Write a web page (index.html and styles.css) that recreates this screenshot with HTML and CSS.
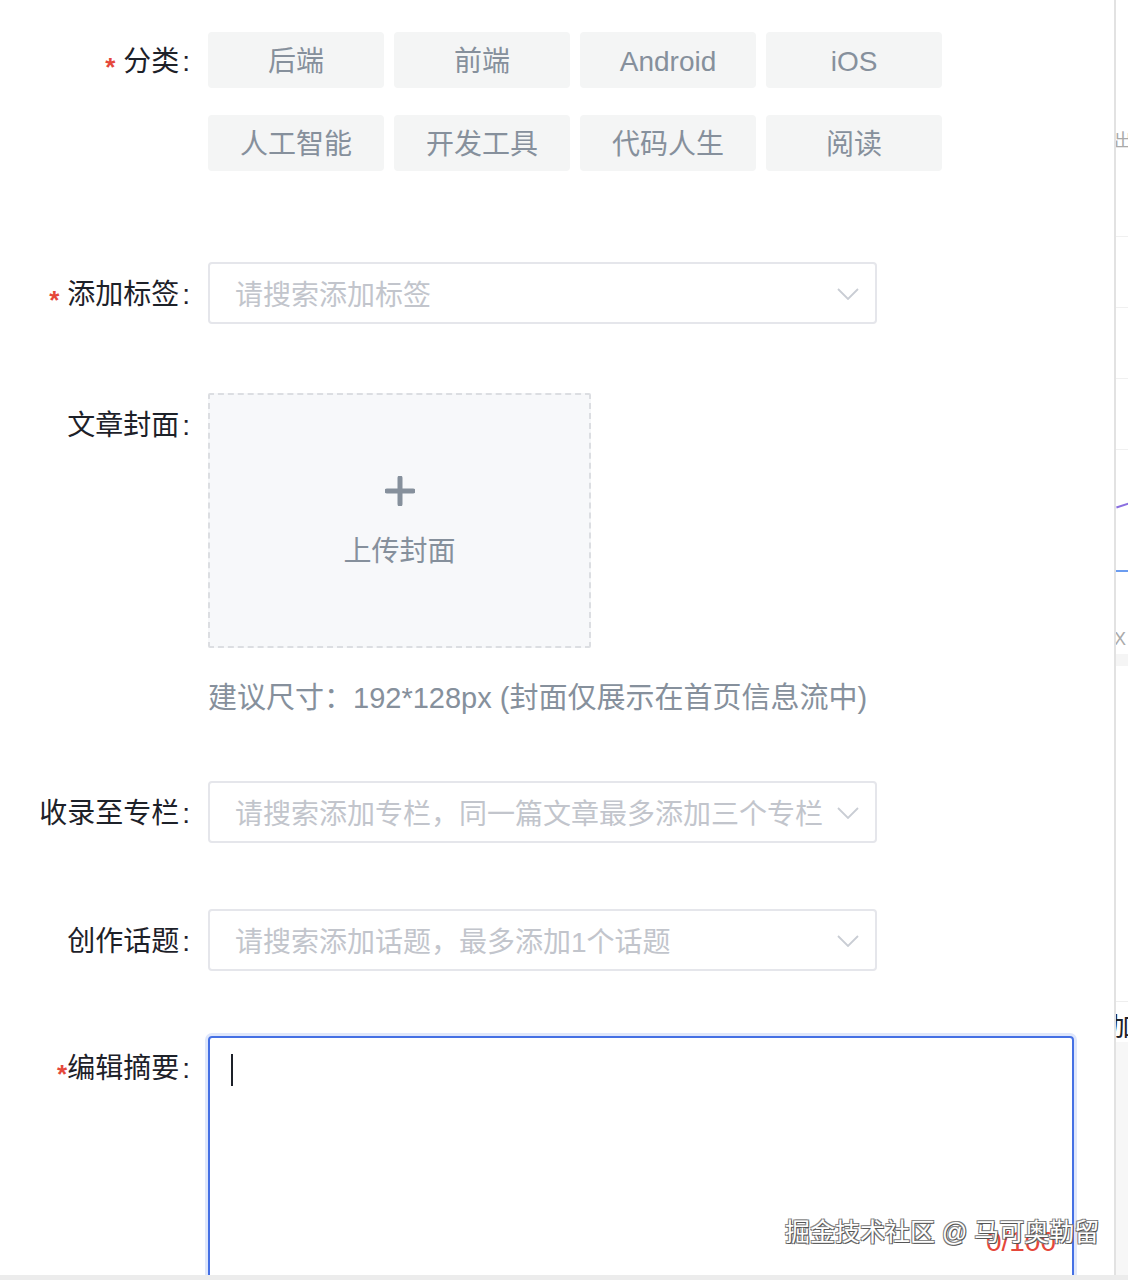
FILE: index.html
```html
<!DOCTYPE html>
<html lang="zh-CN">
  <head>
    <meta charset="utf-8">
    <title>发布文章</title>
    <link rel="stylesheet" href="styles.css">
  </head>
  <body>
    <div class="page">
      <div class="main">
        <!-- 分类 -->
        <div class="form-row row-category">
          <div class="label label-56"><span class="req">*</span> 分类<span class="colon">:</span></div>
          <div class="category-list">
            <div class="cat-btn">后端</div>
            <div class="cat-btn">前端</div>
            <div class="cat-btn">Android</div>
            <div class="cat-btn">iOS</div>
            <div class="cat-btn">人工智能</div>
            <div class="cat-btn">开发工具</div>
            <div class="cat-btn">代码人生</div>
            <div class="cat-btn">阅读</div>
          </div>
        </div>

        <!-- 标签 -->
        <div class="form-row row-tags">
          <div class="label"><span class="req">*</span> 添加标签<span class="colon">:</span></div>
          <div class="select">
            <span class="placeholder">请搜索添加标签</span>
            <svg class="chevron" width="22" height="12" viewBox="0 0 22 12"><path d="M1 1 L11 11 L21 1" fill="none" stroke="#c9cdd4" stroke-width="1.8"/></svg>
          </div>
        </div>

        <!-- 封面 -->
        <div class="form-row row-cover">
          <div class="label">文章封面<span class="colon">:</span></div>
          <div class="cover-col">
            <div class="upload-box">
              <svg class="plus" width="30" height="30" viewBox="0 0 30 30"><path d="M15 2 V28 M2 15 H28" stroke="#86909c" stroke-width="5" stroke-linecap="round"/></svg>
              <div class="upload-text">上传封面</div>
            </div>
            <div class="hint">建议尺寸：192*128px (封面仅展示在首页信息流中)</div>
          </div>
        </div>

        <!-- 专栏 -->
        <div class="form-row row-column">
          <div class="label">收录至专栏<span class="colon">:</span></div>
          <div class="select">
            <span class="placeholder">请搜索添加专栏，同一篇文章最多添加三个专栏</span>
            <svg class="chevron" width="22" height="12" viewBox="0 0 22 12"><path d="M1 1 L11 11 L21 1" fill="none" stroke="#c9cdd4" stroke-width="1.8"/></svg>
          </div>
        </div>

        <!-- 话题 -->
        <div class="form-row row-topic">
          <div class="label">创作话题<span class="colon">:</span></div>
          <div class="select">
            <span class="placeholder">请搜索添加话题，最多添加1个话题</span>
            <svg class="chevron" width="22" height="12" viewBox="0 0 22 12"><path d="M1 1 L11 11 L21 1" fill="none" stroke="#c9cdd4" stroke-width="1.8"/></svg>
          </div>
        </div>

        <!-- 摘要 -->
        <div class="form-row row-summary">
          <div class="label"><span class="req">*</span>编辑摘要<span class="colon">:</span></div>
          <div class="summary-box">
            <span class="caret"></span>
            <span class="counter">0/100</span>
          </div>
        </div>
      </div>

      <div class="side">
        <div class="side-text side-t1">出</div>
        <div class="side-line l1"></div>
        <div class="side-line l2"></div>
        <div class="side-line l3"></div>
        <div class="side-line l4"></div>
        <div class="side-chart">
          <div class="purple"></div>
          <div class="blue"></div>
        </div>
        <div class="side-text side-t2">X</div>
        <div class="side-gap"></div>
        <div class="side-text side-t3">加</div>
        <div class="side-fill"></div>
      </div>

      <div class="watermark">掘金技术社区 @ 马可奥勒留</div>
    </div>
  </body>
</html>
```

FILE: styles.css
```css
* {
  margin: 0;
  padding: 0;
  box-sizing: border-box;
}

body {
  background: #ececec;
  font-family: "Liberation Sans", "Noto Sans CJK SC", sans-serif;
  color: #1d2129;
}

.page {
  position: relative;
  display: flex;
  height: 1275px;
  overflow: hidden;
  background: #fff;
}

/* left form area */
.main {
  width: 1116px;
  flex-shrink: 0;
  border-right: 2px solid #e2e2e2;
  padding-top: 32px;
}

.form-row {
  display: flex;
  align-items: flex-start;
}

.label {
  width: 192px;
  height: 62px;
  flex-shrink: 0;
  margin-right: 16px;
  padding-right: 2px;
  text-align: right;
  font-size: 28px;
  line-height: 66px;
  color: #1d2129;
  white-space: nowrap;
}

.label-56 {
  height: 56px;
  line-height: 60px;
}

.colon {
  margin-left: 3px;
}

.req {
  color: #e5483b;
  font-size: 26px;
  font-weight: bold;
  line-height: 0;
  vertical-align: -5px;
}

/* categories */
.category-list {
  display: grid;
  grid-template-columns: repeat(4, 176px);
  column-gap: 10px;
  row-gap: 27px;
}

.cat-btn {
  height: 56px;
  line-height: 60px;
  text-align: center;
  background: #f4f5f5;
  border-radius: 4px;
  font-size: 28px;
  color: #86909c;
  overflow: hidden;
}

/* select boxes */
.row-tags {
  margin-top: 91px;
}

.select {
  position: relative;
  width: 669px;
  height: 62px;
  border: 2px solid #e5e6eb;
  border-radius: 4px;
  padding: 0 44px 0 25px;
  display: flex;
  align-items: center;
}

.placeholder {
  font-size: 28px;
  color: #c2c5cc;
  white-space: nowrap;
}

.chevron {
  position: absolute;
  right: 16px;
  top: 24px;
}

/* cover */
.row-cover {
  margin-top: 69px;
}

.upload-box {
  width: 383px;
  height: 255px;
  border: 2px dashed #dcdee2;
  background: #f7f8fa;
  border-radius: 2px;
  display: flex;
  flex-direction: column;
  align-items: center;
  justify-content: center;
  padding-top: 6px;
}

.plus {
  margin-bottom: 26px;
}

.upload-text {
  font-size: 28px;
  line-height: 40px;
  color: #86909c;
}

.hint {
  margin-top: 30px;
  font-size: 29px;
  line-height: 40px;
  color: #86909c;
  white-space: nowrap;
}

.row-column {
  margin-top: 63px;
}

.row-topic {
  margin-top: 66px;
}

/* summary */
.row-summary {
  margin-top: 65px;
}

.summary-box {
  position: relative;
  width: 866px;
  height: 252px;
  border: 2px solid #4570e4;
  border-radius: 4px;
  box-shadow: 0 0 0 3px #dfe7fb;
  padding: 16px 21px;
}

.caret {
  display: block;
  width: 2px;
  height: 32px;
  background: #1d2129;
}

.counter {
  position: absolute;
  right: 16px;
  bottom: 28px;
  font-size: 28px;
  line-height: 32px;
  color: #e5483b;
}

/* partial right panel */
.side {
  flex: 1;
  display: flex;
  flex-direction: column;
  background: #fff;
  overflow: hidden;
}

.side-text {
  font-size: 24px;
  line-height: 30px;
  color: #999;
  white-space: nowrap;
  margin-left: -2px;
}

.side-t1 {
  margin-top: 126px;
  color: #aaa;
  font-size: 18px;
}

.side-line {
  border-top: 1px solid #f0f0f0;
}

.l1 { margin-top: 80px; }
.l2 { margin-top: 70px; }
.l3 { margin-top: 70px; }
.l4 { margin-top: 70px; }

.side-chart {
  position: relative;
  height: 150px;
}

.purple {
  position: absolute;
  left: 0;
  top: 54px;
  width: 16px;
  height: 2px;
  background: #8a6fe0;
  transform: rotate(-18deg);
}

.blue {
  position: absolute;
  left: 0;
  top: 120px;
  width: 16px;
  height: 2px;
  background: #6b9cf0;
}

.side-t2 {
  margin-top: 24px;
  font-size: 18px;
  color: #aaa;
}

.side-gap {
  height: 348px;
  border-top: 12px solid #f5f5f5;
  border-bottom: 1px solid #eee;
}

.side-t3 {
  color: #1d2129;
  font-size: 26px;
  margin-left: -6px;
  margin-top: 10px;
}

.side-fill {
  flex: 1;
  background: #f7f7f7;
}

/* watermark over the page */
.watermark {
  position: absolute;
  left: 785px;
  top: 1215px;
  font-size: 25px;
  line-height: 34px;
  color: #fff;
  white-space: nowrap;
  text-shadow: 1px 1px 0 #555, -1px -1px 0 #888, 1px -1px 0 #777, -1px 1px 0 #777;
}
```
